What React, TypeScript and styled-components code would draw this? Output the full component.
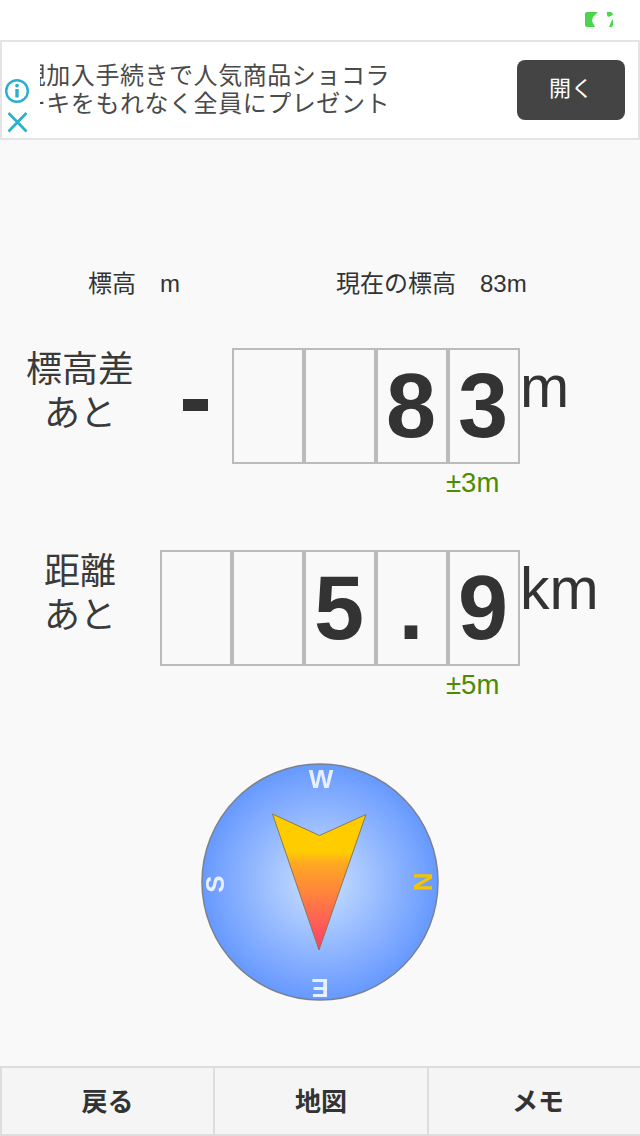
import { FC } from 'react';
import styled, { createGlobalStyle } from 'styled-components';

const GlobalStyle = createGlobalStyle`
    html, body {
        margin: 0;
        padding: 0;
        background: #f9f9f9;
    }
`;

const SANS = `"Liberation Sans", "Noto Sans CJK JP", sans-serif`;

const Page = styled.div`
    width: 640px;
    height: 1136px;
    display: flex;
    flex-direction: column;
    overflow: hidden;
    background: #f9f9f9;
    color: #333;
    font-family: ${SANS};
`;

const StatusBar = styled.div`
    height: 40px;
    flex: none;
    background: #fff;
    display: flex;
    justify-content: flex-end;
    align-items: flex-start;
    padding: 12px 27px 0 0;
    box-sizing: border-box;
`;

const AdBanner = styled.div`
    height: 100px;
    flex: none;
    box-sizing: border-box;
    background: #fff;
    border: 2px solid #e4e4e4;
    display: flex;
    align-items: center;
    padding: 0 13px 0 2px;
`;

const AdIcons = styled.div`
    width: 36px;
    height: 100%;
    flex: none;
    display: flex;
    flex-direction: column;
    align-items: flex-start;
    justify-content: flex-end;
    gap: 5px;
    padding-bottom: 3px;
    box-sizing: border-box;
`;

const AdCopy = styled.div`
    width: 350px;
    flex: none;
    overflow: hidden;
    display: flex;
    flex-direction: column;
    align-items: flex-end;
    font-size: 24px;
    line-height: 28px;
    letter-spacing: 0.55px;
    color: #4a4a4a;
    white-space: nowrap;
    padding-bottom: 1px;
`;

const AdOpen = styled.div`
    width: 108px;
    height: 60px;
    margin-left: auto;
    border-radius: 8px;
    background: #444;
    color: #fff;
    font-size: 22px;
    padding-bottom: 8px;
    box-sizing: border-box;
    display: flex;
    align-items: center;
    justify-content: center;
`;

const Heights = styled.div`
    display: flex;
    margin-top: 126px;
    height: 30px;
    align-items: center;
    font-size: 24px;
    white-space: pre;
`;

const HeightLabel = styled.div<{ $left: number; $width: number }>`
    margin-left: ${p => p.$left}px;
    width: ${p => p.$width}px;
`;

const Measure = styled.div<{ $top: number }>`
    display: flex;
    height: 116px;
    margin-top: ${p => p.$top}px;
`;

const RowLabel = styled.div`
    width: 160px;
    flex: none;
    text-align: center;
    font-size: 36px;
    line-height: 44px;
    color: #3a3a3a;
`;

const Sign = styled.div`
    width: 72px;
    flex: none;
    display: flex;
    align-items: center;
    justify-content: center;
`;

const SignBar = styled.div`
    width: 25px;
    height: 12px;
    background: #333;
    margin: -3px 0 0 -2px;
`;

const Cell = styled.div`
    width: 72px;
    height: 116px;
    flex: none;
    box-sizing: border-box;
    border: 2px solid #bbb;
    padding: 0 2px 0 0;
    display: flex;
    align-items: center;
    justify-content: center;
    font-size: 90px;
    font-weight: 700;
    color: #333;
    line-height: 1;
`;

const Unit = styled.div`
    margin: 7px 0 0 0;
    font-size: 59px;
    line-height: 64px;
    color: #333;
`;

const Tolerance = styled.div`
    margin: 4px 0 0 446px;
    height: 30px;
    line-height: 30px;
    font-size: 27.5px;
    color: #4c8c00;
`;

const CompassWrap = styled.div`
    display: flex;
    justify-content: center;
    margin-top: 62px;
`;

const CompassLetter = styled.text<{ $north?: boolean }>`
    font-family: ${SANS};
    font-size: 26px;
    font-weight: 700;
    text-anchor: middle;
    fill: ${p => (p.$north ? '#f5c400' : '#e8f0ff')};
`;

const Footer = styled.div`
    margin-top: auto;
    height: 70px;
    width: 648px;
    flex: none;
    display: grid;
    grid-template-columns: 214px 214px 220px;
`;

const FooterButton = styled.div`
    box-sizing: border-box;
    background: #f5f5f5;
    border: solid #ddd;
    border-width: 2px 1px;
    padding-bottom: 4px;
    display: flex;
    align-items: center;
    justify-content: center;
    font-size: 26px;
    font-weight: 700;
    color: #333;

    &:first-child {
        border-left-width: 2px;
    }
`;

const Battery: FC = () => (
    <svg width="28" height="16" viewBox="0 0 28 16">
        <path d="M2 0H13L8 5 7 9 10 15H2Q0 15 0 13V2Q0 0 2 0Z" fill="#4cd44c" />
        <path d="M22 0H26Q28 1 28 3L23 5 22 3Z" fill="#4cd44c" />
        <path d="M28 7V13Q28 15 26 15H24L26 10Z" fill="#4cd44c" />
    </svg>
);

const InfoIcon: FC = () => (
    <svg width="26" height="26" viewBox="0 0 26 26">
        <circle cx="13" cy="13" r="10.8" fill="none" stroke="#2aaed2" strokeWidth="2.4" />
        <rect x="11.3" y="11" width="3.4" height="8.5" fill="#2aaed2" />
        <circle cx="13" cy="7.6" r="1.9" fill="#2aaed2" />
    </svg>
);

const CloseIcon: FC = () => (
    <svg width="26" height="26" viewBox="0 0 26 26">
        <path d="M4.5 4 22.5 22.5M22.5 4 4.5 22.5" fill="none" stroke="#2aaed2" strokeWidth="2.6" />
    </svg>
);

const Compass: FC = () => (
    <svg width="240" height="240" viewBox="200 762 240 240">
        <defs>
            <radialGradient id="dial" cx="320" cy="882" r="118" gradientUnits="userSpaceOnUse">
                <stop offset="0" stopColor="#cbe1ff" />
                <stop offset="0.7" stopColor="#85aeff" />
                <stop offset="1" stopColor="#6699ff" />
            </radialGradient>
            <linearGradient id="needle" x1="0" y1="814" x2="0" y2="950" gradientUnits="userSpaceOnUse">
                <stop offset="0" stopColor="#ffcc00" />
                <stop offset="0.28" stopColor="#ffcc00" />
                <stop offset="0.36" stopColor="#ffa922" />
                <stop offset="1" stopColor="#ff3c6e" />
            </linearGradient>
            <filter id="soft" x="-5%" y="-5%" width="110%" height="110%">
                <feGaussianBlur stdDeviation="0.7" />
            </filter>
        </defs>
        <g filter="url(#soft)">
            <circle cx="320" cy="882" r="118" fill="url(#dial)" stroke="#7a8290" strokeWidth="1.5" />
            <path d="M272.5 814 319.5 835.5 366 814.5 319 950Z" fill="url(#needle)" stroke="#8a7a50" strokeWidth="1" />
            <CompassLetter x="321" y="788">W</CompassLetter>
            <CompassLetter $north x="0" y="0" transform="translate(414 882) rotate(90)">N</CompassLetter>
            <CompassLetter x="0" y="0" transform="translate(320 979) rotate(180)">E</CompassLetter>
            <CompassLetter x="0" y="0" transform="translate(224 884) rotate(270)">S</CompassLetter>
        </g>
    </svg>
);

const App: FC = () => (
    <Page>
        <GlobalStyle />
        <StatusBar>
            <Battery />
        </StatusBar>
        <AdBanner>
            <AdIcons>
                <InfoIcon />
                <CloseIcon />
            </AdIcons>
            <AdCopy>
                <span>新規加入手続きで人気商品ショコラ</span>
                <span>ケーキをもれなく全員にプレゼント</span>
            </AdCopy>
            <AdOpen>開く</AdOpen>
        </AdBanner>
        <Heights>
            <HeightLabel $left={88} $width={248}>標高　m</HeightLabel>
            <HeightLabel $left={0} $width={200}>現在の標高　83m</HeightLabel>
        </Heights>
        <Measure $top={52}>
            <RowLabel>標高差<br />あと</RowLabel>
            <Sign><SignBar /></Sign>
            <Cell />
            <Cell />
            <Cell>8</Cell>
            <Cell>3</Cell>
            <Unit>m</Unit>
        </Measure>
        <Tolerance>±3m</Tolerance>
        <Measure $top={52}>
            <RowLabel>距離<br />あと</RowLabel>
            <Cell />
            <Cell />
            <Cell>5</Cell>
            <Cell>.</Cell>
            <Cell>9</Cell>
            <Unit>km</Unit>
        </Measure>
        <Tolerance>±5m</Tolerance>
        <CompassWrap>
            <Compass />
        </CompassWrap>
        <Footer>
            <FooterButton>戻る</FooterButton>
            <FooterButton>地図</FooterButton>
            <FooterButton>メモ</FooterButton>
        </Footer>
    </Page>
);

export default App;
